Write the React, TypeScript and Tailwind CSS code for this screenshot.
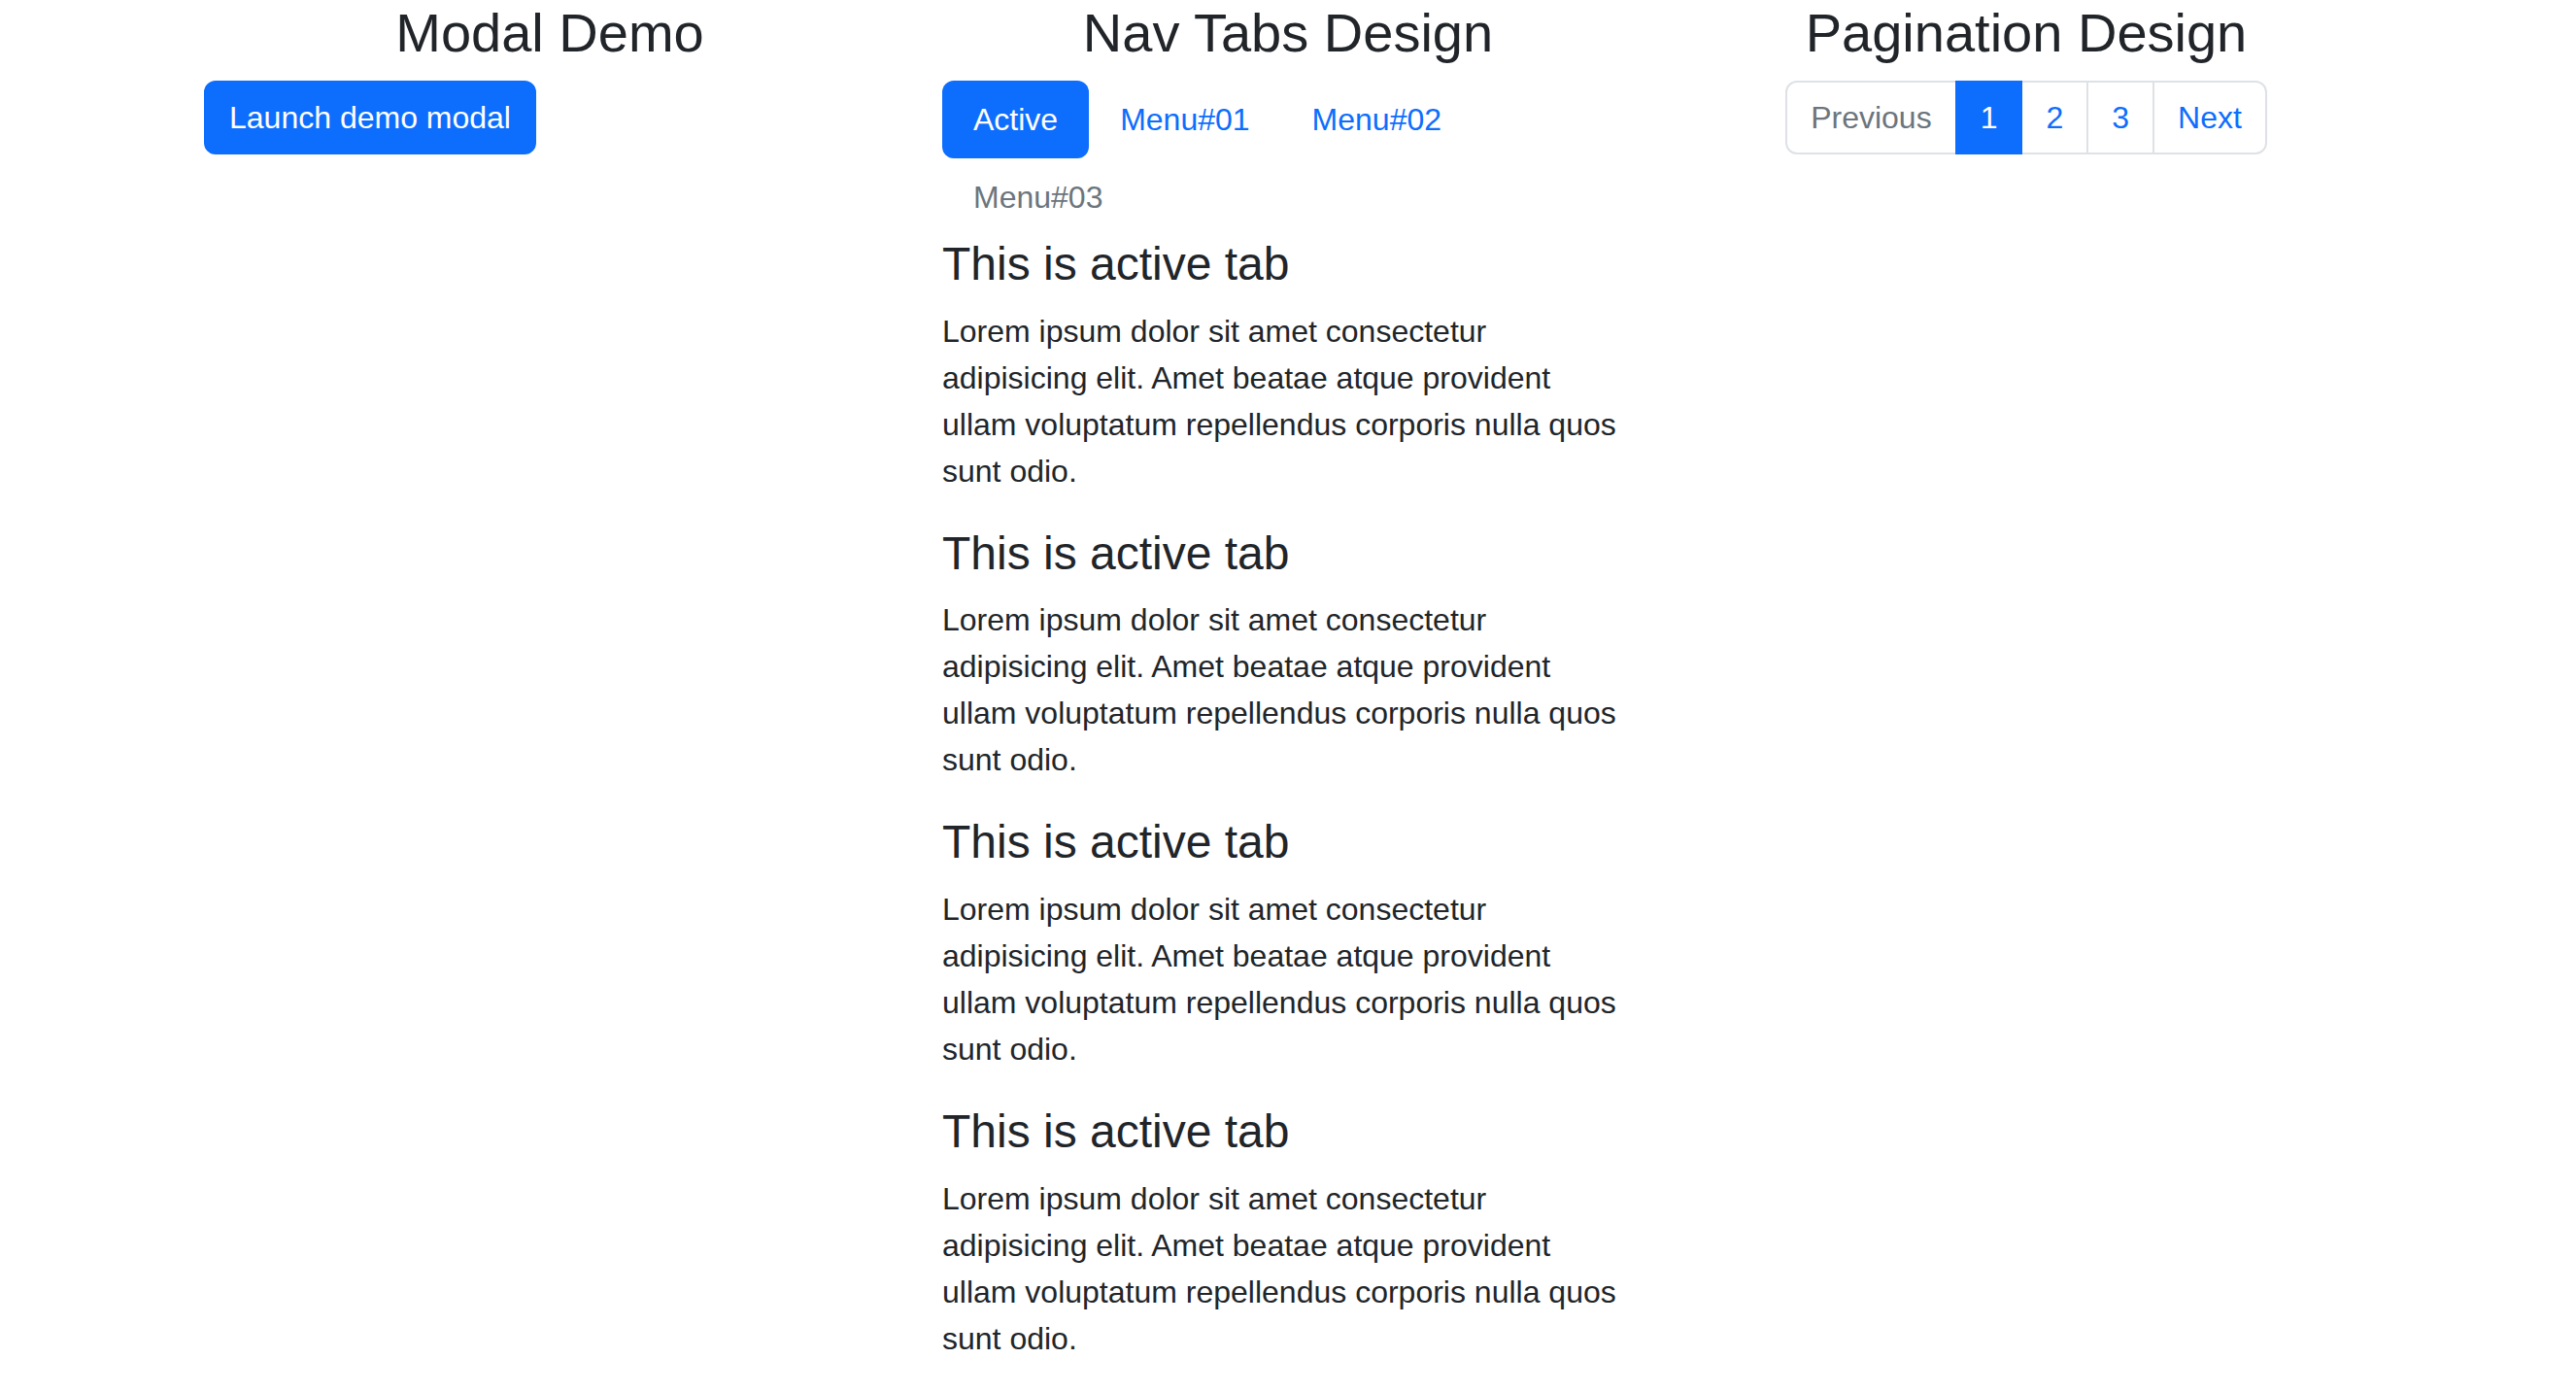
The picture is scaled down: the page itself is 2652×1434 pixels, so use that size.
// App.tsx — three demo columns: modal trigger, nav pills with tab content, pagination.

const sections = [1, 2, 3, 4];

const lorem =
    "Lorem ipsum dolor sit amet consectetur adipisicing elit. Amet beatae atque provident ullam voluptatum repellendus corporis nulla quos sunt odio.";

export default function App() {
    return (
        <div className="min-h-screen bg-white text-[#212529] font-['Liberation_Sans',Arial,sans-serif] text-[32px] leading-[48px]">
            <div className="mx-auto w-[2280px] grid grid-cols-3">

                {/* Modal demo */}
                <div className="px-6">
                    <h3 className="text-center text-[56px] leading-[1.2] font-medium mb-4">
                        Modal Demo
                    </h3>
                    <button className="px-6 py-3 rounded-[12px] border-2 border-[#0d6efd] bg-[#0d6efd] text-white text-[32px] leading-[48px]">
                        Launch demo modal
                    </button>
                </div>

                {/* Nav tabs */}
                <div className="px-6">
                    <h3 className="text-center text-[56px] leading-[1.2] font-medium mb-4">
                        Nav Tabs Design
                    </h3>
                    <ul className="flex flex-wrap">
                        <li>
                            <a className="block px-8 py-4 rounded-[12px] bg-[#0d6efd] text-white">
                                Active
                            </a>
                        </li>
                        <li>
                            <a className="block px-8 py-4 text-[#0d6efd]">Menu#01</a>
                        </li>
                        <li>
                            <a className="block px-8 py-4 text-[#0d6efd]">Menu#02</a>
                        </li>
                        <li>
                            <a className="block px-8 py-4 text-[#6c757d]">Menu#03</a>
                        </li>
                    </ul>
                    <div>
                        {sections.map((i) => (
                            <div key={i}>
                                <h4 className="text-[48px] leading-[1.2] font-medium mb-4">
                                    This is active tab
                                </h4>
                                <p className="mb-8 max-w-[700px]">{lorem}</p>
                            </div>
                        ))}
                    </div>
                </div>

                {/* Pagination */}
                <div className="px-6">
                    <h3 className="text-center text-[56px] leading-[1.2] font-medium mb-4">
                        Pagination Design
                    </h3>
                    <ul className="flex justify-center">
                        <li>
                            <span className="block px-6 py-3 border-2 border-[#dee2e6] rounded-l-[12px] text-[#6c757d] bg-white">
                                Previous
                            </span>
                        </li>
                        <li className="-ml-[2px]">
                            <a className="block px-6 py-3 border-2 border-[#0d6efd] bg-[#0d6efd] text-white relative">
                                1
                            </a>
                        </li>
                        <li className="-ml-[2px]">
                            <a className="block px-6 py-3 border-2 border-[#dee2e6] text-[#0d6efd]">2</a>
                        </li>
                        <li className="-ml-[2px]">
                            <a className="block px-6 py-3 border-2 border-[#dee2e6] text-[#0d6efd]">3</a>
                        </li>
                        <li className="-ml-[2px]">
                            <a className="block px-6 py-3 border-2 border-[#dee2e6] rounded-r-[12px] text-[#0d6efd]">
                                Next
                            </a>
                        </li>
                    </ul>
                </div>

            </div>
        </div>
    );
}
